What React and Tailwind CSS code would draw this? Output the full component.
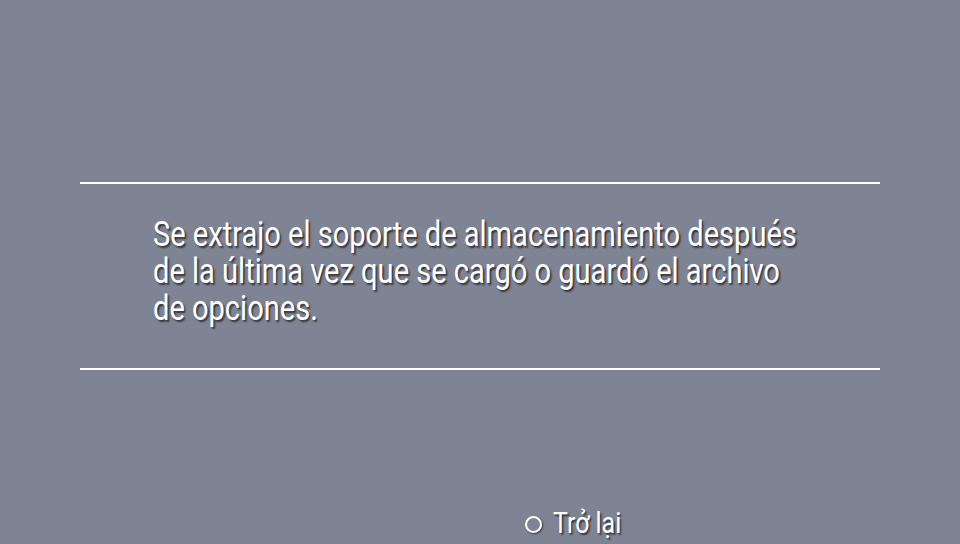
export default function App() {
  return (
    <div
      className="w-[960px] h-[544px] bg-[#7f8494] flex flex-col overflow-hidden"
      style={{ fontFamily: 'Roboto, "Noto Sans", sans-serif' }}
    >
      <div className="pt-[182px] px-[80px]">
        <div className="h-[2px] bg-white" />
        <div className="h-[184px] pl-[73px] pt-[32px]">
          <p className="text-[35px] leading-[37px] text-white [text-shadow:2px_2px_2px_rgba(0,0,0,0.6)] origin-left scale-x-[0.83] w-[900px]">
            Se extrajo el soporte de almacenamiento después
            <br />
            de la última vez que se cargó o guardó el archivo
            <br />
            de opciones.
          </p>
        </div>
        <div className="h-[2px] bg-white" />
      </div>
      <div className="flex-1" />
      <div className="flex items-center pl-[525px] pb-[6px] gap-[11px]">
        <span className="w-[17px] h-[17px] mt-[3px] rounded-full border-[2.5px] border-white [box-shadow:1px_1px_2px_rgba(0,0,0,0.6)]" />
        <span className="text-[30px] leading-[30px] text-white [text-shadow:2px_2px_2px_rgba(0,0,0,0.6)] origin-left scale-x-[0.83] inline-block">
          Trở lại
        </span>
      </div>
    </div>
  );
}
